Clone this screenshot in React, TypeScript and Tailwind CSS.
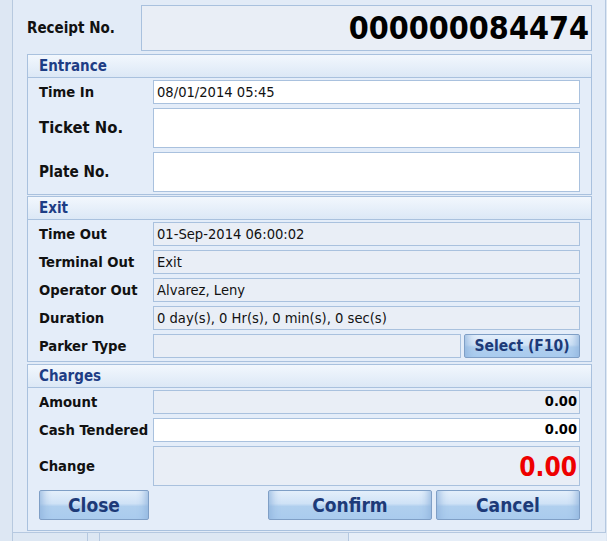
import React from "react";

const FONT = '"DejaVu Sans Condensed", "DejaVu Sans", sans-serif';

function GroupHeader({ title }: { title: string }) {
  return (
    <div className="h-[23px] flex items-center px-[11px] border-b border-[#a9c1de] bg-gradient-to-b from-[#f2f7fd] to-[#dce8f6]">
      <span className="text-[15px] font-bold text-[#1e3d85] leading-none">{title}</span>
    </div>
  );
}

function Field({
  label,
  value,
  white,
  tall,
  labelSize = "text-[14.7px]",
  children,
}: {
  label: string;
  value?: string;
  white?: boolean;
  tall?: boolean;
  labelSize?: string;
  children?: React.ReactNode;
}) {
  return (
    <div className={`flex items-center pl-[11px] pr-[11px] ${tall ? "h-[40px]" : "h-[24px]"}`}>
      <div className={`w-[114px] shrink-0 font-bold text-[#111] ${labelSize}`}>{label}</div>
      {children ?? (
        <div
          className={`flex-1 h-full border border-[#a9c1de] flex items-center px-[3px] text-[14.6px] text-[#111] ${
            white ? "bg-white" : "bg-[#e9eef6]"
          }`}
        >
          {value}
        </div>
      )}
    </div>
  );
}

function Btn({ label, className, text = "text-[19px]" }: { label: string; className: string; text?: string }) {
  return (
    <button
      className={`h-full border border-[#7f9fc6] rounded-[2px] font-bold text-[#1d3a78] ${text} bg-[linear-gradient(to_bottom,#e4effb_0%,#cfe2f6_45%,#b0cfee_55%,#a9cbee_100%)] shadow-[inset_12px_0_10px_-10px_#8fb3dc,inset_-12px_0_10px_-10px_#8fb3dc] ${className}`}
    >
      {label}
    </button>
  );
}

export default function App() {
  return (
    <div
      className="w-[607px] h-[541px] bg-[#dde7f3] flex overflow-hidden relative"
      style={{ fontFamily: FONT }}
    >
      {/* left strip */}
      <div className="w-[13px] shrink-0 border-r border-[#b7c9df] bg-[#dde7f3]" />

      <div className="flex flex-col">
        {/* main panel */}
        <div className="w-[593px] h-[533px] border-r border-b border-[#b5c8e0] bg-[#e2ebf7] pl-[14px] pr-[13px] pt-[5px] flex flex-col">
          {/* receipt */}
          <div className="flex items-center h-[46px]">
            <div className="w-[114px] shrink-0 text-[15px] font-bold text-[#111]">Receipt No.</div>
            <div className="flex-1 h-full border border-[#a9c1de] bg-[#e9eef6] flex items-center justify-end pr-[2px]">
              <span className="text-[32px] font-bold text-black leading-none">000000084474</span>
            </div>
          </div>

          {/* entrance */}
          <div className="mt-[3px] border border-[#a9c1de] bg-[#e4edf9] flex flex-col pb-[2px]">
            <GroupHeader title="Entrance" />
            <div className="flex flex-col gap-[4px] pt-[2px]">
              <Field label="Time In" value="08/01/2014 05:45" white />
              <Field label="Ticket No." white tall labelSize="text-[16.5px]" />
              <Field label="Plate No." white tall labelSize="text-[15.2px]" />
            </div>
          </div>

          {/* exit */}
          <div className="mt-[1px] border border-[#a9c1de] bg-[#e4edf9] flex flex-col pb-[3px]">
            <GroupHeader title="Exit" />
            <div className="flex flex-col gap-[4px] pt-[2px]">
              <Field label="Time Out" value="01-Sep-2014 06:00:02" />
              <Field label="Terminal Out" value="Exit" />
              <Field label="Operator Out" value="Alvarez, Leny" />
              <Field label="Duration" value="0 day(s), 0 Hr(s), 0 min(s), 0 sec(s)" />
              <Field label="Parker Type">
                <div className="flex-1 h-full flex gap-[3px]">
                  <div className="w-[308px] h-full border border-[#a9c1de] bg-[#e9eef6]" />
                  <Btn label="Select (F10)" className="flex-1" text="text-[15.5px]" />
                </div>
              </Field>
            </div>
          </div>

          {/* charges */}
          <div className="mt-[2px] border border-[#a9c1de] bg-[#e4edf9] flex flex-col flex-1 mb-[1px]">
            <GroupHeader title="Charges" />
            <div className="flex flex-col gap-[4px] pt-[2px]">
              <Field label="Amount">
                <div className="flex-1 h-full border border-[#a9c1de] bg-[#e9eef6] flex items-center justify-end px-[2px] text-[14.5px] font-bold text-black">
                  0.00
                </div>
              </Field>
              <Field label="Cash Tendered">
                <div className="flex-1 h-full border border-[#a9c1de] bg-white flex items-center justify-end px-[2px] text-[14.5px] font-bold text-black">
                  0.00
                </div>
              </Field>
              <Field label="Change" tall>
                <div className="flex-1 h-full border border-[#a9c1de] bg-[#e9eef6] flex items-center justify-end pr-[2px] pt-[3px] text-[26px] font-bold text-[#ee0000]">
                  0.00
                </div>
              </Field>
              <div className="h-[30px] flex pl-[11px] pr-[11px]">
                <Btn label="Close" className="w-[110px]" />
                <div className="flex-1" />
                <Btn label="Confirm" className="w-[164px]" />
                <Btn label="Cancel" className="w-[144px] ml-[4px]" />
              </div>
            </div>
          </div>
        </div>

        {/* bottom strip */}
        <div className="flex-1 flex">
          <div className="w-[75px] border-r border-[#b5c8e0]" />
          <div className="w-[12px] border-r border-[#b5c8e0]" />
          <div className="w-[248px] " />
          <div className="flex-1 border-l border-[#b5c8e0] bg-[#e6eef8]" />
        </div>
      </div>
    </div>
  );
}
